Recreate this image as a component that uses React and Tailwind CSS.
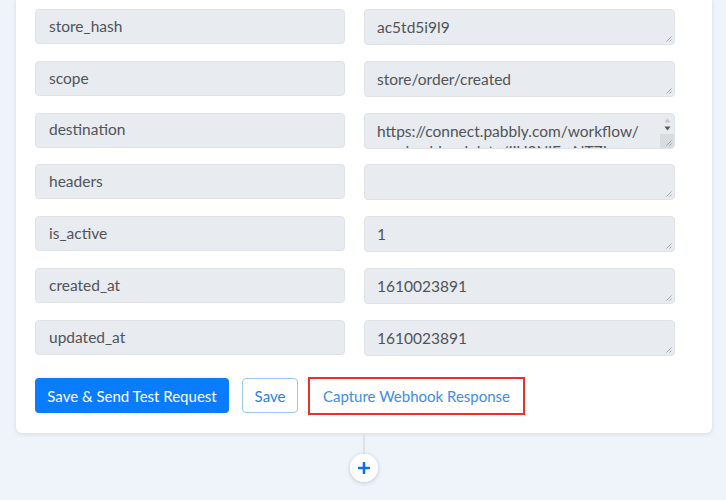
import React from "react";

const rows = [
  { key: "store_hash", value: "ac5td5i9l9" },
  { key: "scope", value: "store/order/created" },
  { key: "destination", value: "https://connect.pabbly.com/workflow/", more: "sendwebhookdata/IjU3NjEwNTZj" },
  { key: "headers", value: "" },
  { key: "is_active", value: "1" },
  { key: "created_at", value: "1610023891" },
  { key: "updated_at", value: "1610023891" },
];

function Grip() {
  return (
    <svg className="absolute right-[2px] bottom-[2px]" width="7" height="7" viewBox="0 0 7 7">
      <path d="M6.5 1.5L1.5 6.5M6.5 4.5L4.5 6.5" stroke="#9aa0a6" strokeWidth="0.9" />
    </svg>
  );
}

function ScrollColumn() {
  return (
    <div className="absolute right-0 top-0 bottom-0 w-[14px] flex flex-col items-center">
      <svg className="mt-[4px]" width="7" height="5" viewBox="0 0 7 5">
        <path d="M3.5 0.5L6.5 4.5H0.5Z" fill="#c3c6ca" />
      </svg>
      <svg className="mt-[3px]" width="7" height="5" viewBox="0 0 7 5">
        <path d="M0.5 0.5H6.5L3.5 4.5Z" fill="#55585c" />
      </svg>
      <div className="mt-[3px] w-full flex-1 bg-[#d9dcdf] rounded-br-[4px]" />
    </div>
  );
}

export default function App() {
  return (
    <div className="w-[726px] h-[500px] overflow-hidden bg-[#eff3fa] font-['Lato',sans-serif] text-[15.5px] text-[#505459]">
      <div className="ml-4 w-[696px] bg-white rounded-b-md shadow-[0_1px_4px_rgba(60,80,120,0.15)] pt-[9px] pb-[18px] pl-[19px]">
        <div className="flex flex-col gap-[15.8px]">
          {rows.map((r) => (
            <div key={r.key} className="flex gap-[19px]">
              <div className="w-[310px] h-[35px] flex items-center px-[13px] bg-[#e8ebef] border border-[#dfe3e8] rounded-[4px]">
                {r.key}
              </div>
              <div className="relative w-[311px] h-[36px] px-[12px] pt-[7px] leading-[20px] bg-[#e8ebef] border border-[#dfe3e8] rounded-[4px] overflow-hidden whitespace-nowrap">
                <div>{r.value}</div>
                {r.more && <div>{r.more}</div>}
                {r.more ? <ScrollColumn /> : null}
                <Grip />
              </div>
            </div>
          ))}
        </div>
        <div className="flex items-center mt-[21px] text-[15px]">
          <button className="w-[194px] h-[35px] rounded-[4px] bg-[#0a7cff] text-white">
            Save &amp; Send Test Request
          </button>
          <button className="ml-[13px] w-[56px] h-[35px] rounded-[4px] border border-[#9cc7f5] text-[#2b82e3] bg-white">
            Save
          </button>
          <button className="ml-[10px] w-[217px] h-[38px] border-2 border-[#ef2d2d] text-[#3e8ce6] bg-white">
            Capture Webhook Response
          </button>
        </div>
      </div>
      <div className="flex flex-col items-center w-[28px] ml-[350px]">
        <div className="w-[2px] h-[21px] bg-[#dde2ea]" />
        <div className="w-[28px] h-[28px] rounded-full bg-white shadow-[0_1px_4px_rgba(60,80,120,0.25)] flex items-center justify-center">
          <svg width="12" height="12" viewBox="0 0 12 12">
            <path d="M6 1v10M1 6h10" stroke="#0a6ff0" strokeWidth="2.6" strokeLinecap="round" />
          </svg>
        </div>
      </div>
    </div>
  );
}
